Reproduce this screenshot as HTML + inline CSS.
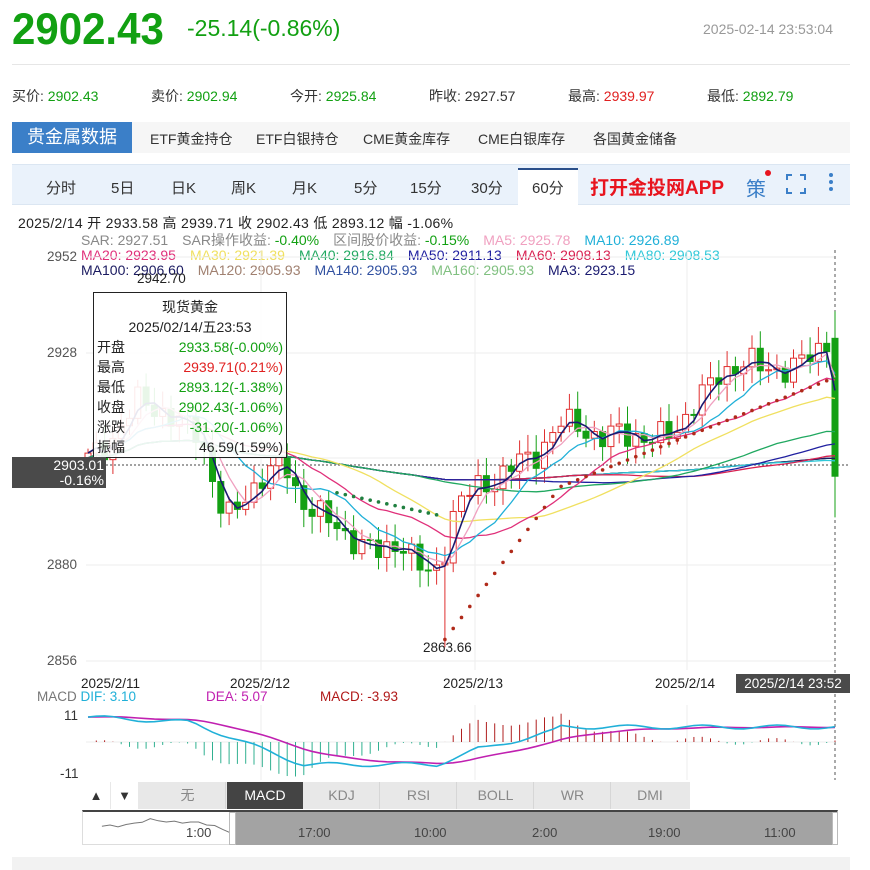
<!DOCTYPE html>
<html><head><meta charset="utf-8">
<style>
*{margin:0;padding:0;box-sizing:border-box}
body{width:870px;height:870px;background:#fff;font-family:"Liberation Sans","Noto Sans CJK SC",sans-serif;position:relative;overflow:hidden;color:#333}
.a{position:absolute;white-space:nowrap}
.g{margin-left:14px}
</style></head><body>
<div class="a" style="left:12px;top:4px;font-size:42px;font-weight:bold;color:#12a012;transform:scaleY(1.05);transform-origin:left top">2902.43</div>
<div class="a" style="left:187px;top:15px;font-size:23px;color:#12a012">-25.14(-0.86%)</div>
<div class="a" style="left:703px;top:21px;font-size:14px;color:#999">2025-02-14 23:53:04</div>
<div class="a" style="left:12px;top:64px;width:838px;height:1px;background:#e6e6e6"></div>
<div class="a" style="left:12px;top:86px;font-size:14px;color:#333">买价: <span style="color:#12a012">2902.43</span></div>
<div class="a" style="left:151px;top:86px;font-size:14px">卖价: <span style="color:#12a012">2902.94</span></div>
<div class="a" style="left:290px;top:86px;font-size:14px">今开: <span style="color:#12a012">2925.84</span></div>
<div class="a" style="left:429px;top:86px;font-size:14px">昨收: 2927.57</div>
<div class="a" style="left:568px;top:86px;font-size:14px">最高: <span style="color:#e02020">2939.97</span></div>
<div class="a" style="left:707px;top:86px;font-size:14px">最低: <span style="color:#12a012">2892.79</span></div>
<div class="a" style="left:12px;top:122px;width:838px;height:31px;background:#f6f6f6"></div>
<div class="a" style="left:12px;top:122px;width:120px;height:31px;background:#3b7fc8;color:#fff;font-size:18px;line-height:31px;text-align:center">贵金属数据</div>
<div class="a" style="left:150px;top:129px;font-size:14px">ETF黄金持仓</div>
<div class="a" style="left:256px;top:129px;font-size:14px">ETF白银持仓</div>
<div class="a" style="left:363px;top:129px;font-size:14px">CME黄金库存</div>
<div class="a" style="left:478px;top:129px;font-size:14px">CME白银库存</div>
<div class="a" style="left:593px;top:129px;font-size:14px">各国黄金储备</div>
<div class="a" style="left:12px;top:164px;width:838px;height:41px;background:#eaf2fb;border-top:1px solid #dbe6f2;border-bottom:1px solid #dbe6f2"></div>
<div class="a" style="left:518px;top:168px;width:60px;height:37px;background:#fff;border-top:2px solid #2a4f8a"></div>
<div style="position:absolute;top:177px;font-size:15px;color:#333">
<span class="a" style="left:46px">分时</span><span class="a" style="left:111px">5日</span><span class="a" style="left:171px">日K</span><span class="a" style="left:231px">周K</span><span class="a" style="left:292px">月K</span><span class="a" style="left:354px">5分</span><span class="a" style="left:410px">15分</span><span class="a" style="left:471px">30分</span><span class="a" style="left:532px">60分</span></div>
<div class="a" style="left:590px;top:173px;font-size:19px;font-weight:bold;color:#e8141e">打开金投网APP</div>
<div class="a" style="left:746px;top:173px;font-size:20px;color:#3b7fc8">策</div>
<div class="a" style="left:765px;top:170px;width:6px;height:6px;border-radius:3px;background:#e8141e"></div>
<div class="a" style="left:786px;top:174px;width:20px;height:20px;border:2px solid #3b7fc8"></div>
<div class="a" style="left:792px;top:172px;width:8px;height:24px;background:#eaf2fb"></div>
<div class="a" style="left:784px;top:180px;width:24px;height:8px;background:#eaf2fb"></div>
<div class="a" style="left:829px;top:173px;width:4px;height:4px;border-radius:2px;background:#3b7fc8;box-shadow:0 7px 0 #3b7fc8,0 14px 0 #3b7fc8"></div>

<div class="a" style="left:18px;top:213px;font-size:14px;color:#222;letter-spacing:0.3px">2025/2/14 开 2933.58 高 2939.71 收 2902.43 低 2893.12 幅 -1.06%</div>
<div class="a" style="left:81px;top:233px;font-size:14px;color:#888;line-height:15px">SAR: 2927.51<span class="g">SAR操作收益: </span><span style="color:#12a012">-0.40%</span><span class="g">区间股价收益: </span><span style="color:#12a012">-0.15%</span><span class="g" style="color:#f0a0c0">MA5: 2925.78</span><span class="g" style="color:#20b0d8">MA10: 2926.89</span><br>
<span style="color:#e0307a">MA20: 2923.95</span><span class="g" style="color:#f0e060">MA30: 2921.39</span><span class="g" style="color:#20a860">MA40: 2916.84</span><span class="g" style="color:#2020a0">MA50: 2911.13</span><span class="g" style="color:#d82050">MA60: 2908.13</span><span class="g" style="color:#30c8d8">MA80: 2908.53</span><br>
<span style="color:#1a1a60">MA100: 2906.60</span><span class="g" style="color:#a08070">MA120: 2905.93</span><span class="g" style="color:#3050a0">MA140: 2905.93</span><span class="g" style="color:#80c080">MA160: 2905.93</span><span class="g" style="color:#1a1a70">MA3: 2923.15</span></div>
<div class="a" style="left:47px;top:249px;font-size:13.5px;color:#555">2952</div>
<div class="a" style="left:47px;top:345px;font-size:13.5px;color:#555">2928</div>
<div class="a" style="left:47px;top:557px;font-size:13.5px;color:#555">2880</div>
<div class="a" style="left:47px;top:653px;font-size:13.5px;color:#555">2856</div>

<svg class="a" style="left:0;top:0" width="870" height="870" id="sv"></svg>

<div class="a" style="left:137px;top:271px;font-size:13.5px;color:#222">2942.70</div>
<div class="a" style="left:423px;top:640px;font-size:13.5px;color:#222">2863.66</div>
<div class="a" style="left:93px;top:292px;width:194px;height:166px;background:rgba(255,255,255,0.9);border:1px solid #222;font-size:14px;line-height:20px;color:#222">
<div style="text-align:center;margin-top:4px">现货黄金</div>
<div style="text-align:center">2025/02/14/五23:53</div>
<div style="padding:0 3px">开盘<span style="float:right;color:#12a012">2933.58(-0.00%)</span></div>
<div style="padding:0 3px">最高<span style="float:right;color:#e02020">2939.71(0.21%)</span></div>
<div style="padding:0 3px">最低<span style="float:right;color:#12a012">2893.12(-1.38%)</span></div>
<div style="padding:0 3px">收盘<span style="float:right;color:#12a012">2902.43(-1.06%)</span></div>
<div style="padding:0 3px">涨跌<span style="float:right;color:#12a012">-31.20(-1.06%)</span></div>
<div style="padding:0 3px">振幅<span style="float:right">46.59(1.59%)</span></div>
</div>
<div class="a" style="left:12px;top:457px;width:94px;height:31px;background:#4a4a4a;color:#fff;font-size:14px;line-height:15px;text-align:right;padding:1px 2px">2903.01<br>-0.16%</div>

<div class="a" style="left:81px;top:676px;font-size:13.5px;color:#222">2025/2/11</div>
<div class="a" style="left:230px;top:676px;font-size:13.5px;color:#222">2025/2/12</div>
<div class="a" style="left:443px;top:676px;font-size:13.5px;color:#222">2025/2/13</div>
<div class="a" style="left:655px;top:676px;font-size:13.5px;color:#222">2025/2/14</div>
<div class="a" style="left:736px;top:674px;width:114px;height:19px;background:#4a4a4a;color:#fff;font-size:13.5px;line-height:19px;text-align:center">2025/2/14 23:52</div>
<div class="a" style="left:37px;top:689px;font-size:13.5px;color:#777">MACD <span style="color:#20b0d8">DIF: 3.10</span></div>
<div class="a" style="left:206px;top:689px;font-size:13.5px;color:#c020b0">DEA: 5.07</div>
<div class="a" style="left:320px;top:689px;font-size:13.5px;color:#b01818">MACD: -3.93</div>
<div class="a" style="left:64px;top:708px;font-size:13.5px;color:#333">11</div>
<div class="a" style="left:60px;top:766px;font-size:13.5px;color:#333">-11</div>

<div class="a" style="left:82px;top:782px;width:608px;height:27px;background:#e8e8e8"></div>
<div class="a" style="left:82px;top:782px;width:28px;height:27px;background:#fff;font-size:13px;text-align:center;line-height:27px">▲</div>
<div class="a" style="left:111px;top:782px;width:27px;height:27px;background:#fff;font-size:13px;text-align:center;line-height:27px">▼</div>
<div style="position:absolute;top:782px;font-size:14px;color:#888;line-height:27px">
<span class="a" style="left:150px;width:76px;text-align:center;border-right:1px solid #d6d6d6">无</span>
<span class="a" style="left:227px;width:76px;text-align:center;background:#444;color:#fff">MACD</span>
<span class="a" style="left:304px;width:76px;text-align:center;border-right:1px solid #d6d6d6">KDJ</span>
<span class="a" style="left:381px;width:76px;text-align:center;border-right:1px solid #d6d6d6">RSI</span>
<span class="a" style="left:458px;width:76px;text-align:center;border-right:1px solid #d6d6d6">BOLL</span>
<span class="a" style="left:535px;width:76px;text-align:center;border-right:1px solid #d6d6d6">WR</span>
<span class="a" style="left:612px;width:76px;text-align:center">DMI</span></div>
<div class="a" style="left:82px;top:810px;width:756px;height:35px;border:1px solid #ddd;border-top:2px solid #444"></div>
<div class="a" style="left:236px;top:812px;width:596px;height:33px;background:#a3a3a3"></div>
<div class="a" style="left:229px;top:812px;width:7px;height:33px;background:#fff;border:1px solid #bbb"></div>
<div class="a" style="left:832px;top:812px;width:6px;height:33px;background:#fff;border:1px solid #bbb"></div>
<div style="position:absolute;top:825px;font-size:13px;color:#444">
<span class="a" style="left:186px">1:00</span><span class="a" style="left:298px">17:00</span><span class="a" style="left:414px">10:00</span><span class="a" style="left:532px">2:00</span><span class="a" style="left:648px">19:00</span><span class="a" style="left:764px">11:00</span></div>
<div class="a" style="left:12px;top:857px;width:838px;height:13px;background:#f2f2f2"></div>

<script>
var sv=document.getElementById('sv'),h='';
function Y(p){return 257+(2952-p)*4.42;}
[257,353,458,565,661].forEach(function(y){h+='<line x1="86" x2="835" y1="'+y+'" y2="'+y+'" stroke="#eee"/>';});
[261,475,687].forEach(function(x){h+='<line x1="'+x+'" x2="'+x+'" y1="250" y2="670" stroke="#eee"/><line x1="'+x+'" x2="'+x+'" y1="705" y2="780" stroke="#eee"/>';});
h+='<line x1="835" x2="835" y1="250" y2="780" stroke="#555" stroke-dasharray="3,3"/>';
h+='<line x1="106" x2="850" y1="465" y2="465" stroke="#444" stroke-dasharray="2,2"/>';
var K=[[86,2906],[110,2910],[140,2920],[175,2915],[200,2912],[225,2892],[240,2896],[260,2902],[285,2905],[300,2897],[330,2892],[360,2887],[380,2885],[400,2888],[425,2880],[440,2882],[455,2895],[475,2900],[500,2902],[520,2906],[540,2908],[560,2914],[575,2915],[600,2910],[620,2913],[650,2910],[680,2914],[700,2920],[720,2926],[750,2928],[770,2927],[790,2926],[810,2930],[828,2933]];
function P(x){for(var i=1;i<K.length;i++){if(x<=K[i][0]){var a=K[i-1],b=K[i];return a[1]+(b[1]-a[1])*(x-a[0])/(b[0]-a[0]);}}return K[K.length-1][1];}
var C=[],xs=[],N=90;
for(var i=0;i<N;i++){var x=88+i*8.3;xs.push(x);C.push(P(x)+Math.sin(i*2.3)*2.2+Math.cos(i*1.1)*1.3);}
xs.push(835);C.push(2902.4);
var prev=C[0]-1;
for(var i=0;i<C.length;i++){var o=prev,c=C[i],up=c>=o;var hi=Math.max(o,c)+1+Math.abs(Math.sin(i*3.7))*3,lo=Math.min(o,c)-1-Math.abs(Math.cos(i*2.9))*3;
if(i==C.length-1){o=2933.6;hi=2939.7;lo=2893.1;up=false;}
if(i==Math.round((443-88)/8.3)){lo=2863.7;}
var col=up?'#e03030':'#14a014',x=xs[i];
h+='<line x1="'+x+'" x2="'+x+'" y1="'+Y(hi)+'" y2="'+Y(lo)+'" stroke="'+col+'"/>';
var y1=Y(Math.max(o,c)),hh=Math.max(1,Y(Math.min(o,c))-y1);
h+='<rect x="'+(x-3)+'" y="'+y1+'" width="6" height="'+hh+'" fill="'+(up?'#fff':col)+'" stroke="'+col+'"/>';prev=c;}
function ma(n,col,w){var d='';for(var i=0;i<C.length;i++){var s=0,k=0;for(var j=Math.max(0,i-n+1);j<=i;j++){s+=C[j];k++;}var v=s/k;if(n>30){v=v*0.6+2905*0.4;}d+=(i?'L':'M')+xs[i].toFixed(1)+' '+Y(v).toFixed(1);}h+='<path d="'+d+'" fill="none" stroke="'+col+'" stroke-width="'+(w||1.3)+'"/>';}
ma(160,'#80c080');ma(140,'#3050a0');ma(120,'#a08070');ma(100,'#1a1a60');ma(80,'#30c8d8');ma(60,'#d82050');ma(50,'#2020a0');ma(40,'#20a860');ma(30,'#f0e060');ma(20,'#e0307a');ma(10,'#20b0d8');ma(5,'#f0a0c0');ma(3,'#1a1a70',1.6);
for(var i=0;i<C.length;i+=1){var x=xs[i];if(x>440&&x<560){var v=2864+(x-440)*0.3;h+='<circle cx="'+x+'" cy="'+Y(v)+'" r="1.8" fill="#b02a1a"/>';}
else if(x>560&&x<830){var v=2900+(x-560)*0.09;h+='<circle cx="'+x+'" cy="'+Y(v)+'" r="1.8" fill="#b02a1a"/>';}
else if(x>330&&x<440){var v=2899-(x-330)*0.05;h+='<circle cx="'+x+'" cy="'+Y(v)+'" r="1.8" fill="#208040"/>';}}
h+='<line x1="86" x2="835" y1="742" y2="742" stroke="#eee"/>';
var dif=[],dea=[];
for(var i=0;i<xs.length;i++){var x=xs[i];var d=(x<190?10-(x-86)*0.02:x<300?8-(x-190)*0.15:x<430?-9:x<480?-10+(x-430)*0.15:x<560?-3+(x-480)*0.1:6);dif.push(d+Math.sin(i*0.7)*0.8);}
dea[0]=dif[0];for(var i=1;i<dif.length;i++)dea[i]=dea[i-1]*0.85+dif[i]*0.15;
function my(v){return 742-v*2.5;}
var d1='',d2='';for(var i=0;i<xs.length;i++){var m=(dif[i]-dea[i])*2,x=xs[i];h+='<line x1="'+x+'" x2="'+x+'" y1="742" y2="'+my(m)+'" stroke="'+(m>0?'#b02020':'#30b090')+'"/>';d1+=(i?'L':'M')+x+' '+my(dif[i]);d2+=(i?'L':'M')+x+' '+my(dea[i]);}
h+='<path d="'+d2+'" fill="none" stroke="#c020b0" stroke-width="1.6"/><path d="'+d1+'" fill="none" stroke="#20b0d8" stroke-width="1.6"/>';
var nd='';for(var i=0;i<xs.length;i++){var nx=100+(xs[i]-86)*0.97;nd+=(i?'L':'M')+nx.toFixed(1)+' '+(845-(C[i]-2870)*0.5).toFixed(1);}
h+='<path d="'+nd+'" fill="none" stroke="#777"/>';
sv.innerHTML=h;
</script>
</body></html>
